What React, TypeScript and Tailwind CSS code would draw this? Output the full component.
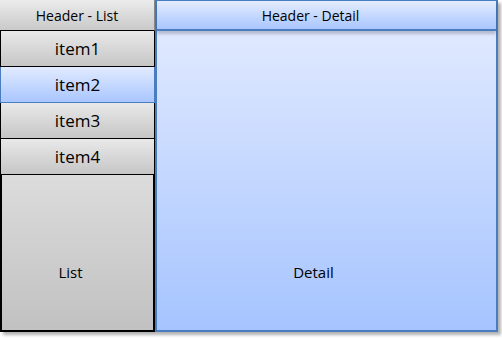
const ITEMS = ['item1', 'item2', 'item3', 'item4']
const SELECTED = 'item2'

const font = { fontFamily: '"Open Sans", "DejaVu Sans", sans-serif' }

export default function App() {
  return (
    <div className="w-[502px] h-[338px] bg-white overflow-hidden" style={font}>
      <div className="flex h-[332px]">
        {/* list column */}
        <div className="w-[155px] flex flex-col shadow-[3px_3px_3px_rgba(0,0,0,0.3)]">
          <div className="h-[31px] shrink-0 flex items-center justify-center border-b border-black border-r border-r-[#888] bg-gradient-to-b from-[#ececec] to-[#c9c9c9] text-[14px] text-black">
            Header - List
          </div>
          {ITEMS.map((item) =>
            item === SELECTED ? (
              <div
                key={item}
                className="h-[36px] shrink-0 flex items-center justify-center border border-t-0 border-[#4a7cc0] bg-gradient-to-b from-[#e2ebff] to-[#a9c6ff] text-[17px] text-black"
              >
                {item}
              </div>
            ) : (
              <div
                key={item}
                className="h-[36px] shrink-0 flex items-center justify-center border border-t-0 border-black bg-gradient-to-b from-[#e9e9e9] to-[#c6c6c6] text-[17px] text-black"
              >
                {item}
              </div>
            )
          )}
          <div className="flex-1 flex justify-center pt-[86px] pr-[14px] border-2 border-t-0 border-black bg-gradient-to-b from-[#dcdcdc] to-[#c1c1c1] text-[15px] text-black">
            List
          </div>
        </div>

        {/* detail column */}
        <div className="w-[343px] flex flex-col border-2 border-[#4a7cc0] border-t-0 shadow-[3px_3px_3px_rgba(0,0,0,0.3)]">
          <div className="h-[31px] shrink-0 flex items-center justify-center pr-[32px] border-t border-[#4a7cc0] border-b-2 bg-gradient-to-b from-[#e4ecff] to-[#a9c6ff] text-[14px] text-black shadow-[0_3px_3px_rgba(0,0,0,0.2)] relative z-10">
            Header - Detail
          </div>
          <div className="flex-1 flex justify-center pt-[230px] pr-[26px] bg-gradient-to-b from-[#e0e9ff] to-[#a6c4ff] text-[15px] text-black">
            Detail
          </div>
        </div>
      </div>
    </div>
  )
}
